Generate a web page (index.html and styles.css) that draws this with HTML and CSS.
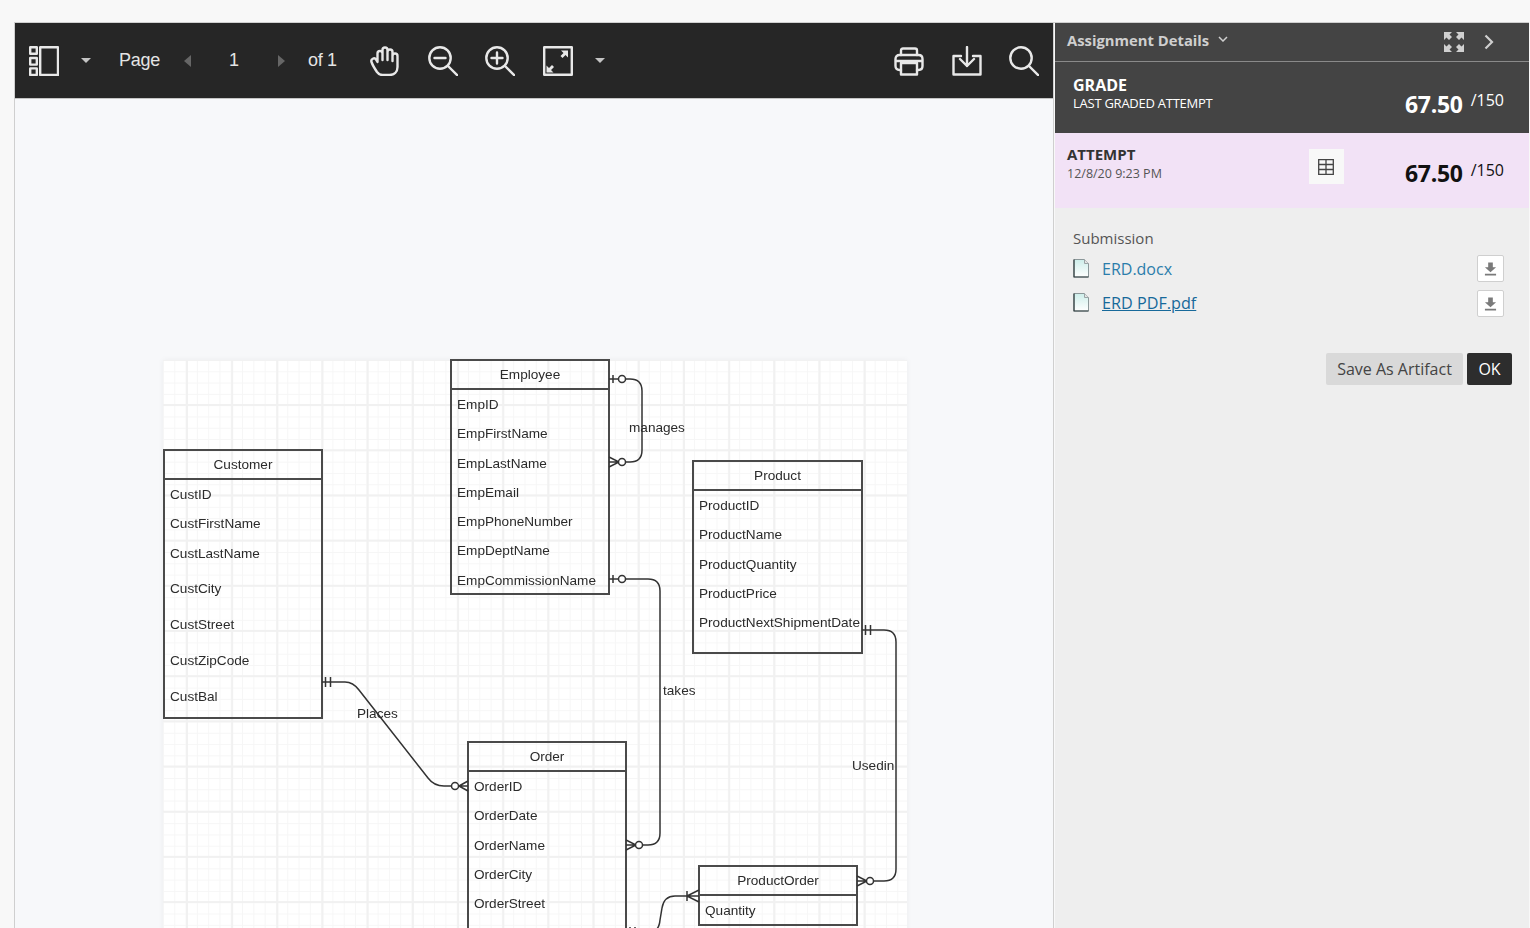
FILE: index.html
```html
<!DOCTYPE html>
<html lang="en">
<head>
    <meta charset="UTF-8">
    <title>Assignment Details</title>
    <link rel="stylesheet" href="styles.css">
</head>
<body>
    <div class="app">
        <div class="viewer">
            <div class="toolbar">
                <svg class="tool-icon sidebar-icon" viewBox="0 0 30 30"><path d="M1.2 1.2h6.6v6.6H1.2zM1.2 12h6.6v6.6H1.2zM1.2 22.4h6.6V29H1.2zM11.2 1.2H29V29H11.2z"/></svg>
                <span class="caret caret-first"></span>
                <span class="tool-text page-label">Page</span>
                <span class="arrow-left"></span>
                <span class="tool-text page-num">1</span>
                <span class="arrow-right"></span>
                <span class="tool-text page-of">of 1</span>
                <svg class="tool-icon hand-icon" viewBox="0 0 30 30"><path d="M7 26C5 23 2.5 19 1.5 16c-1-3 3-5 4.6-2.400L7.500 16V7.500a2.500 2.500 0 0 1 5 0V14V4a2.500 2.500 0 0 1 5 0v10V6a2.500 2.500 0 0 1 5 0v9-5a2.500 2.500 0 0 1 5 0v11c0 5-3.500 8-8 8h-7c-2.500 0-4-1-5.500-3z"/></svg>
                <svg class="tool-icon zoom-out-icon" viewBox="0 0 30 30"><circle cx="12" cy="12" r="10.700"/><path d="M20 20l9.300 9.300M6.500 12h11"/></svg>
                <svg class="tool-icon zoom-in-icon" viewBox="0 0 30 30"><circle cx="12" cy="12" r="10.700"/><path d="M20 20l9.300 9.300M6.500 12h11M12 6.500v11"/></svg>
                <svg class="tool-icon fit-icon" viewBox="0 0 30 30"><path d="M1.200 1.200h27.600v27.600H1.200z"/><path class="fit-arrow" d="M18 4.500h7v7l-2.500-2.500-3 3-2-2 3-3zM3.500 26.500v-7l2.500 2.500 3-3 2 2-3 3 2.500 2.500z"/></svg>
                <span class="caret caret-last"></span>
                <svg class="tool-icon print-icon" viewBox="0 0 30 30"><path d="M7 9V4.500C7 3 8 2.500 9 2.500h12c1 0 2 .5 2 2V9"/><path d="M7 24H5.500c-2.500 0-4-1.500-4-4v-7c0-2.500 1.500-4 4-4h19c2.500 0 4 1.500 4 4v7c0 2.500-1.500 4-4 4H23"/><path d="M7 17h16v11.500H7zM2 15h26"/></svg>
                <svg class="tool-icon tray-icon" viewBox="0 0 30 30"><path d="M9 10H1.500v18.500h27V10H21M15 1v19M8 13l7 7 7-7"/></svg>
                <svg class="tool-icon search-icon" viewBox="0 0 30 30"><circle cx="12" cy="12" r="10.700"/><path d="M20 20l9.300 9.300"/></svg>
            </div>
            <div class="page-area">
                <div class="canvas">
                    <div class="entity customer">
                        <div class="entity-title">Customer</div>
                        <div class="entity-row">CustID</div>
                        <div class="entity-row">CustFirstName</div>
                        <div class="entity-row">CustLastName</div>
                        <div class="entity-row tall">CustCity</div>
                        <div class="entity-row tall">CustStreet</div>
                        <div class="entity-row tall">CustZipCode</div>
                        <div class="entity-row tall">CustBal</div>
                    </div>
                    <div class="entity employee">
                        <div class="entity-title">Employee</div>
                        <div class="entity-row">EmpID</div>
                        <div class="entity-row">EmpFirstName</div>
                        <div class="entity-row">EmpLastName</div>
                        <div class="entity-row">EmpEmail</div>
                        <div class="entity-row">EmpPhoneNumber</div>
                        <div class="entity-row">EmpDeptName</div>
                        <div class="entity-row">EmpCommissionName</div>
                    </div>
                    <div class="entity product">
                        <div class="entity-title">Product</div>
                        <div class="entity-row">ProductID</div>
                        <div class="entity-row">ProductName</div>
                        <div class="entity-row">ProductQuantity</div>
                        <div class="entity-row">ProductPrice</div>
                        <div class="entity-row">ProductNextShipmentDate</div>
                    </div>
                    <div class="entity order">
                        <div class="entity-title">Order</div>
                        <div class="entity-row">OrderID</div>
                        <div class="entity-row">OrderDate</div>
                        <div class="entity-row">OrderName</div>
                        <div class="entity-row">OrderCity</div>
                        <div class="entity-row">OrderStreet</div>
                        <div class="entity-row">OrderZipCode</div>
                    </div>
                    <div class="entity product-order">
                        <div class="entity-title">ProductOrder</div>
                        <div class="entity-row">Quantity</div>
                    </div>
                    <svg class="links" viewBox="163 360 744 600">
                        <path d="M609 379H630Q642 379 642 391V450Q642 462 630 462H609M613 375V383M609 457L619 462L609 467"/>
                        <circle cx="622" cy="379" r="3.500"/>
                        <circle cx="622" cy="462" r="3.500"/>
                        <path d="M609 579H648Q660 579 660 591V833Q660 845 648 845H626M613 575V583M626 840L636 845L626 850"/>
                        <circle cx="622" cy="579" r="3.500"/>
                        <circle cx="639" cy="845" r="3.500"/>
                        <path d="M862 630H884Q896 630 896 642V869Q896 881 884 881H857M865.500 625V635M870.500 625V635M857 876L867 881L857 886"/>
                        <circle cx="870" cy="881" r="3.500"/>
                        <path d="M322 682H345Q353 682 359 690L428 778Q434 786 444 786H468M325.500 677V687M330.500 677V687M459 786L468 781M459 786L468 791"/>
                        <circle cx="455" cy="786" r="3.500"/>
                        <path d="M626 932H650Q659 932 660 920L662 908Q664 896 675 896H699M630 927V937M635 927V937M687 891V901M687 896L699 890M687 896L699 902"/>
                        <text x="629" y="432">manages</text>
                        <text x="663" y="695">takes</text>
                        <text x="357" y="718">Places</text>
                        <text x="852" y="770">Usedin</text>
                    </svg>
                </div>
            </div>
        </div>

        <div class="panel">
            <div class="panel-head">
                <span class="panel-title">Assignment Details</span>
                <svg class="title-chevron" viewBox="0 0 10 6"><path d="M1 1l4 4 4-4"/></svg>
                <svg class="expand-icon" viewBox="0 0 20 20"><path d="M0 0h8L5.500 2.500 8 5 5 8 2.500 5.500 0 8zM20 0v8l-2.500-2.500L15 8l-3-3 2.500-2.500L12 0zM0 20v-8l2.500 2.500L5 12l3 3-2.500 2.500L8 20zM20 20h-8l2.500-2.500L12 15l3-3 2.500 2.500L20 12z"/></svg>
                <svg class="head-chevron" viewBox="0 0 10 16"><path d="M1.500 1.500L8 8l-6.500 6.500"/></svg>
            </div>
            <div class="grade-row">
                <div class="grade-text">
                    <div class="grade-title">GRADE</div>
                    <div class="grade-sub">LAST GRADED ATTEMPT</div>
                </div>
                <div class="score"><span class="score-big">67.50</span><span class="score-max">/150</span></div>
            </div>
            <div class="attempt-row">
                <div class="attempt-text">
                    <div class="attempt-title">ATTEMPT</div>
                    <div class="attempt-date">12/8/20 9:23 PM</div>
                </div>
                <div class="rubric-btn">
                    <svg viewBox="0 0 16 16"><path d="M.7.7h14.600v14.600H.7zM.7 5.500h14.600M.7 10.500h14.600M8 .7v14.600"/></svg>
                </div>
                <div class="score"><span class="score-big">67.50</span><span class="score-max">/150</span></div>
            </div>
            <div class="panel-body">
                <div class="sub-label">Submission</div>
                <div class="file-row">
                    <svg class="file-icon" viewBox="0 0 17 19">
                        <defs><linearGradient id="paper" x1="0" y1="0" x2="0" y2="1"><stop offset="0" stop-color="#cdeeea"/><stop offset="1" stop-color="#ffffff"/></linearGradient></defs>
                        <path class="file-sheet" d="M1 .5h10.500L15.500 4.500V18H1z"/><path class="file-fold" d="M11.500.5v4h4"/><path class="file-edge" d="M1 .5V18H15.500"/>
                    </svg>
                    <a class="file-link" href="#">ERD.docx</a>
                    <div class="download-btn"><svg viewBox="0 0 14 14"><path d="M4.500 0h5v5H13L7 10.500 1 5h3.500zM1 12h12v2H1z"/></svg></div>
                </div>
                <div class="file-row">
                    <svg class="file-icon" viewBox="0 0 17 19">
                        <path class="file-sheet" d="M1 .5h10.500L15.500 4.500V18H1z"/><path class="file-fold" d="M11.500.5v4h4"/><path class="file-edge" d="M1 .5V18H15.500"/>
                    </svg>
                    <a class="file-link active" href="#">ERD PDF.pdf</a>
                    <div class="download-btn"><svg viewBox="0 0 14 14"><path d="M4.500 0h5v5H13L7 10.500 1 5h3.500zM1 12h12v2H1z"/></svg></div>
                </div>
                <div class="panel-actions">
                    <button class="btn-artifact">Save As Artifact</button>
                    <button class="btn-ok">OK</button>
                </div>
            </div>
        </div>
    </div>
</body>
</html>
```

FILE: styles.css
```css
html, body {
    height: 100%;
}

body {
    margin: 0;
    background-color: #f8f8f8;
    overflow: hidden;
    font-family: "Open Sans", sans-serif;
}

.app {
    display: flex;
    height: 906px;
    margin: 22px 1px 0 14px;
    border-top: 1px solid #cfcfcf;
    box-sizing: border-box;
}

/* pdf viewer */
.viewer {
    width: 1040px;
    flex: none;
    border-left: 1px solid #cfcfcf;
    border-right: 1px solid #cfcfcf;
    box-sizing: border-box;
    margin-right: 1px;
    background-color: #f7f8fa;
    display: flex;
    flex-direction: column;
    overflow: hidden;
}

.toolbar {
    display: flex;
    align-items: center;
    flex: none;
    height: 75px;
    padding-left: 14px;
    background-color: #262626;
    border-bottom: 1px solid #c4c4c4;
    box-sizing: content-box;
}

.tool-icon {
    width: 30px;
    height: 30px;
    flex: none;
    fill: none;
    stroke: #e8e8e8;
    stroke-width: 2.4;
    stroke-linecap: round;
    stroke-linejoin: round;
}

.tool-text {
    font-family: "Liberation Sans", Arial, sans-serif;
    font-size: 18px;
    letter-spacing: -0.3px;
    color: #e4e4e4;
}

.caret {
    width: 0;
    height: 0;
    flex: none;
    border-left: 5.5px solid transparent;
    border-right: 5.5px solid transparent;
    border-top: 5.5px solid #c4c4c4;
}

.caret-first { margin-left: 22px; }
.page-label { margin-left: 28px; width: 41px; }

.arrow-left, .arrow-right {
    width: 0;
    height: 0;
    flex: none;
    border-top: 6.5px solid transparent;
    border-bottom: 6.5px solid transparent;
}

.arrow-left {
    margin-left: 24px;
    border-right: 7px solid #666;
}

.arrow-right {
    margin-left: 40px;
    border-left: 7px solid #666;
}

.page-num { margin-left: 38px; width: 9px; }
.page-of { margin-left: 23px; width: 30px; }
.hand-icon { margin-left: 32px; }
.zoom-out-icon { margin-left: 28px; }
.zoom-in-icon { margin-left: 27px; }
.fit-icon { margin-left: 28px; }
.caret-last { margin-left: 22px; }
.print-icon { margin-left: auto; }
.tray-icon { margin-left: 28px; }
.search-icon { margin-left: 27px; margin-right: 14px; }

.fit-arrow {
    fill: #e8e8e8;
    stroke: none;
}

.page-area {
    flex: 1;
    overflow: hidden;
    padding: 261px 0 0 148px;
}

/* the diagram is a picture of a page, a little soft */
.canvas {
    position: relative;
    width: 744px;
    height: 600px;
    background-color: #fff;
    background-image:
        linear-gradient(to right, #f1f1f1 2px, transparent 2px),
        linear-gradient(to bottom, #f1f1f1 2px, transparent 2px),
        linear-gradient(to right, #f6f6f6 1px, transparent 1px),
        linear-gradient(to bottom, #f6f6f6 1px, transparent 1px);
    background-size: 45.2px 45.2px, 45.2px 45.2px, 11.3px 11.3px, 11.3px 11.3px;
    background-position: 23px 0, 0 44px, 0 0, 0 0;
    box-shadow: 0 0 6px rgba(0, 0, 0, 0.05);
    filter: blur(0.45px);
    font-family: "Liberation Sans", Arial, sans-serif;
    color: #2b2b2b;
}

.entity {
    position: absolute;
    box-sizing: border-box;
    border: 2px solid #4a4a4a;
    font-size: 13.6px;
}

.entity-title {
    height: 27px;
    line-height: 28px;
    text-align: center;
    border-bottom: 2px solid #4a4a4a;
}

.entity-row {
    height: 29.300px;
    line-height: 29.300px;
    padding-left: 5px;
    white-space: nowrap;
    overflow: hidden;
}

.entity-row.tall {
    height: 36px;
    line-height: 36px;
}

.entity-row:not(.tall) + .tall {
    margin-top: 3.500px;
}

.customer { left: 0; top: 89px; width: 160px; height: 270px; }
.employee { left: 287px; top: -1px; width: 160px; height: 236px; }
.product { left: 529px; top: 100px; width: 171px; height: 194px; }
.order { left: 304px; top: 381px; width: 160px; height: 219px; border-bottom: none; }
.product-order { left: 535px; top: 505px; width: 160px; height: 61px; }

.links {
    position: absolute;
    left: 0;
    top: 0;
    width: 744px;
    height: 600px;
}

.links path {
    fill: none;
    stroke: #333;
    stroke-width: 1.500;
}

.links circle {
    fill: #fff;
    stroke: #333;
    stroke-width: 1.500;
}

.links text {
    font-size: 13.6px;
    fill: #2b2b2b;
}

/* right panel */
.panel {
    flex: 1;
    display: flex;
    flex-direction: column;
    background-color: #eeeeee;
}

.panel-head {
    display: flex;
    align-items: center;
    flex: none;
    height: 38px;
    padding: 0 35px 0 12px;
    background-color: #444;
    border-bottom: 1px solid #8a8a8a;
}

.panel-title {
    margin-top: -4px;
    font-size: 14.800px;
    font-weight: 700;
    color: #cfcfcf;
}

.title-chevron {
    width: 10px;
    height: 6px;
    margin: -6px 0 0 9px;
    fill: none;
    stroke: #cfcfcf;
    stroke-width: 1.500;
}

.expand-icon {
    width: 20px;
    height: 20px;
    margin-left: auto;
    fill: #d0d0d0;
}

.head-chevron {
    width: 10px;
    height: 16px;
    margin-left: 20px;
    fill: none;
    stroke: #cfcfcf;
    stroke-width: 2.200;
}

.grade-row {
    display: flex;
    justify-content: space-between;
    flex: none;
    height: 71px;
    padding: 0 25px 0 18px;
    background-color: #444;
    color: #fff;
}

.grade-text {
    padding-top: 13px;
}

.grade-title {
    font-size: 16px;
    font-weight: 700;
    line-height: 20px;
}

.grade-sub {
    font-size: 13px;
    line-height: 17px;
    letter-spacing: -0.25px;
}

.score {
    display: flex;
    align-items: flex-start;
    padding-top: 26px;
}

.score-big {
    font-size: 23px;
    font-weight: 700;
    line-height: 32px;
    letter-spacing: -0.3px;
}

.score-max {
    margin-left: 8px;
    font-size: 16px;
    line-height: 24px;
}

.attempt-row {
    display: flex;
    flex: none;
    height: 75px;
    padding: 0 25px 0 12px;
    background-color: #f2e2f6;
    color: #111;
}

.attempt-text {
    padding-top: 11px;
}

.attempt-title {
    font-size: 15px;
    font-weight: 700;
    line-height: 20px;
    color: #333;
}

.attempt-date {
    margin-top: 2px;
    font-size: 12.500px;
    line-height: 16px;
    color: #555;
}

.rubric-btn {
    display: flex;
    align-items: center;
    justify-content: center;
    width: 35px;
    height: 35px;
    margin: 16px 0 0 147px;
    background-color: #f8f8f8;
}

.rubric-btn svg {
    width: 16px;
    height: 16px;
    fill: none;
    stroke: #444;
    stroke-width: 1.300;
}

.attempt-row .score {
    margin-left: auto;
    padding-top: 24px;
}

.attempt-row .score-max {
    line-height: 26px;
}

.panel-body {
    padding: 20px 17px 0 18px;
}

.sub-label {
    font-size: 15px;
    line-height: 20px;
    color: #555;
    margin-bottom: 7px;
}

.file-row {
    display: flex;
    align-items: center;
    height: 27px;
    margin-bottom: 8px;
    padding-right: 8px;
}

.file-icon {
    width: 17px;
    height: 19px;
    flex: none;
}

.file-row + .file-row .file-icon {
    margin-bottom: 2px;
}

.file-sheet {
    fill: url(#paper);
    stroke: #8b9799;
    stroke-width: 1;
}

.file-fold {
    fill: #e4e4e4;
    stroke: #9aa5a6;
    stroke-width: 1;
}

.file-edge {
    fill: none;
    stroke: #2f3c3e;
    stroke-width: 1.200;
}

.file-link {
    margin-left: 12px;
    font-size: 16px;
    color: #2b7dab;
    text-decoration: none;
}

.file-link.active {
    margin-bottom: 2px;
    font-size: 16.200px;
    font-weight: 500;
    color: #17699a;
    text-decoration: underline;
}

.download-btn {
    display: flex;
    align-items: center;
    justify-content: center;
    width: 27px;
    height: 27px;
    margin-left: auto;
    box-sizing: border-box;
    background-color: #fff;
    border: 1px solid #cfcfcf;
    border-radius: 2px;
}

.download-btn svg {
    width: 13px;
    height: 14px;
    fill: #7a7a7a;
}

.panel-actions {
    display: flex;
    justify-content: flex-end;
    gap: 4px;
    margin-top: 36px;
}

.panel-actions button {
    height: 32px;
    border: none;
    border-radius: 2px;
    font-family: "Open Sans", sans-serif;
    font-size: 16px;
    padding: 0;
    cursor: pointer;
}

.btn-artifact {
    width: 137px;
    background-color: #d9d9d9;
    color: #444;
}

.btn-ok {
    width: 45px;
    background-color: #2d2d2d;
    color: #fff;
}
```
